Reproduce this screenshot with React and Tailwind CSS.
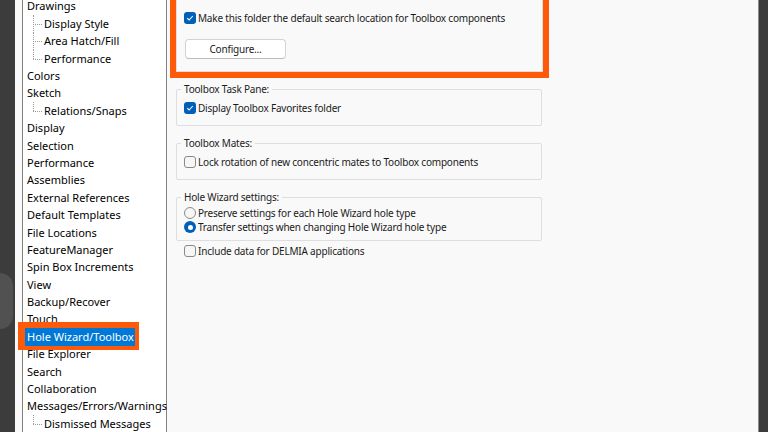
import React from "react";

const treeItems = [
  { label: "Drawings" },
  { label: "Display Style", child: true },
  { label: "Area Hatch/Fill", child: true },
  { label: "Performance", child: true, last: true },
  { label: "Colors" },
  { label: "Sketch" },
  { label: "Relations/Snaps", child: true, last: true },
  { label: "Display" },
  { label: "Selection" },
  { label: "Performance" },
  { label: "Assemblies" },
  { label: "External References" },
  { label: "Default Templates" },
  { label: "File Locations" },
  { label: "FeatureManager" },
  { label: "Spin Box Increments" },
  { label: "View" },
  { label: "Backup/Recover" },
  { label: "Touch" },
  { label: "Hole Wizard/Toolbox", selected: true },
  { label: "File Explorer" },
  { label: "Search" },
  { label: "Collaboration" },
  { label: "Messages/Errors/Warnings" },
  { label: "Dismissed Messages", child: true, last: true },
];

function Guide({ last }) {
  // dotted tree connector
  return (
    <div className="relative w-[10px] self-stretch ml-[10px] shrink-0">
      <div
        className={`absolute left-0 top-0 border-l border-dotted border-[#9a9a9a] ${
          last ? "h-1/2" : "h-full"
        }`}
      />
      <div className="absolute left-0 top-1/2 w-[9px] border-t border-dotted border-[#9a9a9a]" />
    </div>
  );
}

function TreeRow({ item }) {
  if (item.child) {
    return (
      <div className="flex items-center h-[17.4px]">
        <Guide last={item.last} />
        <span className="ml-[1px] whitespace-nowrap">{item.label}</span>
      </div>
    );
  }
  if (item.selected) {
    return (
      <div className="flex items-center h-[17.4px]">
        <span className="relative ml-[2px] pl-[2px] pr-[1px] h-full flex items-center bg-[#0078d7] text-white whitespace-nowrap">
          {item.label}
          <span className="absolute -left-[7px] -top-[6px] -right-[4px] -bottom-[4px] border-l-[7px] border-t-[6px] border-r-[4px] border-b-[4px] border-[#ff5a0a]" />
        </span>
      </div>
    );
  }
  return (
    <div className="flex items-center h-[17.4px] pl-[4px] whitespace-nowrap">
      {item.label}
    </div>
  );
}

function Checkbox({ checked }) {
  if (checked) {
    return (
      <span className="w-[12px] h-[12px] rounded-[3px] bg-[#005fb8] flex items-center justify-center shrink-0">
        <svg width="8" height="8" viewBox="0 0 8 8">
          <polyline
            points="1.2,4.2 3.1,6 6.8,2"
            fill="none"
            stroke="#ffffff"
            strokeWidth="1.1"
          />
        </svg>
      </span>
    );
  }
  return (
    <span className="w-[12px] h-[12px] rounded-[3px] border border-[#8a8a8a] bg-[#f6f6f6] shrink-0" />
  );
}

function Radio({ checked }) {
  if (checked) {
    return (
      <span className="w-[12px] h-[12px] rounded-full bg-[#005fb8] flex items-center justify-center shrink-0">
        <span className="w-[5px] h-[5px] rounded-full bg-white" />
      </span>
    );
  }
  return (
    <span className="w-[12px] h-[12px] rounded-full border border-[#8a8a8a] bg-[#f6f6f6] shrink-0" />
  );
}

function Option({ children, control }) {
  return (
    <div className="flex items-center h-[14px] gap-[2px]">
      {control}
      <span className="whitespace-nowrap">{children}</span>
    </div>
  );
}

function Group({ title, className = "", children }) {
  return (
    <div
      className={`relative ml-[9px] w-[366px] border border-[#dedede] rounded-[2px] pl-[7px] ${className}`}
    >
      <span className="absolute left-[4px] -top-[8px] h-[14px] px-[3px] bg-[#f9f9f9] leading-[14px] text-[#222] whitespace-nowrap">
        {title}
      </span>
      {children}
    </div>
  );
}

export default function App() {
  return (
    <div
      className="relative w-[768px] h-[432px] overflow-hidden flex bg-[#3c3c3c] text-black"
      style={{ fontFamily: '"Noto Sans", "Open Sans", sans-serif' }}
    >
      <div className="w-[15px] shrink-0 relative">
        <div className="absolute left-0 top-[273px] w-[13px] h-[56px] rounded-r-full bg-[#515151]" />
      </div>

      <div className="w-[743px] shrink-0 flex bg-[#f9f9f9]">
        <div className="ml-[7px] w-[145px] shrink-0 bg-white border-l border-r border-[#828282] text-[11px]">
          <div className="-mt-[2px]">
            {treeItems.map((item, i) => (
              <TreeRow key={i} item={item} />
            ))}
          </div>
        </div>

        <div className="flex-1 flex flex-col text-[10px] tracking-[-0.2px] text-[#1b1b1b]">
          <div className="ml-[3px] -mt-[30px] w-[379px] border-[6px] border-[#ff5a0a]">
            <div className="h-[96px] border border-[#dedede] pl-[7px] pt-[34px]">
              <Option control={<Checkbox checked />}>
                Make this folder the default search location for Toolbox components
              </Option>
              <button className="mt-[14px] ml-[1px] w-[101px] h-[20px] rounded-[4px] bg-white border border-[#d3d3d3] border-b-[#bcbcbc] text-[10px] text-[#1b1b1b] flex items-center justify-center">
                Configure...
              </button>
            </div>
          </div>

          <Group title="Toolbox Task Pane:" className="mt-[11px] h-[37px] pt-[11px]">
            <Option control={<Checkbox checked />}>Display Toolbox Favorites folder</Option>
          </Group>

          <Group title="Toolbox Mates:" className="mt-[17px] h-[37px] pt-[11px]">
            <Option control={<Checkbox />}>
              Lock rotation of new concentric mates to Toolbox components
            </Option>
          </Group>

          <Group title="Hole Wizard settings:" className="mt-[17px] h-[44px] pt-[8px]">
            <Option control={<Radio />}>Preserve settings for each Hole Wizard hole type</Option>
            <Option control={<Radio checked />}>
              Transfer settings when changing Hole Wizard hole type
            </Option>
          </Group>

          <div className="mt-[3px] ml-[17px]">
            <Option control={<Checkbox />}>Include data for DELMIA applications</Option>
          </div>
        </div>
      </div>

      <div className="w-[1px] shrink-0 bg-[#8c8c8c]" />
      <div className="flex-1 bg-[#3c3c3c]" />
    </div>
  );
}
